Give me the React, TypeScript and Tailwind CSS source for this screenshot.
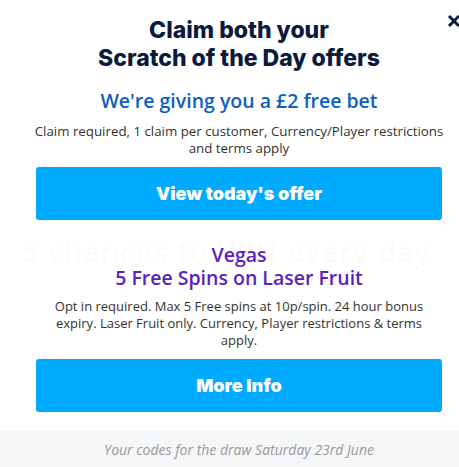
import React from "react";

export default function App() {
  const body = { fontFamily: '"Open Sans", "Noto Sans", sans-serif' };
  const heavy = { fontFamily: 'Inter, "Open Sans", sans-serif' };
  return (
    <div className="relative w-[459px] h-[467px] overflow-hidden bg-white" style={body}>
      <div className="absolute left-[22px] top-[230px] whitespace-nowrap text-[28px] text-[#fafafa] tracking-[2px]">
        5 chances to WIN every day
      </div>
      <button className="absolute right-[-7px] top-[11px] w-[24px] h-[20px] flex items-center justify-center text-[#0b1a3d]">
        <svg width="14" height="14" viewBox="0 0 14 14">
          <path d="M2 2 L12 12 M12 2 L2 12" stroke="currentColor" strokeWidth="3" strokeLinecap="butt" />
        </svg>
      </button>
      <div className="relative flex flex-col items-center pt-[16px] pl-[36px] pr-[17px]">
        <h1 className="text-[23px] leading-[28px] font-extrabold text-[#0b1a3d] text-center whitespace-nowrap" style={heavy}>
          Claim both your<br />Scratch of the Day offers
        </h1>
        <h2 className="mt-[17px] text-[19.5px] leading-[24px] font-semibold text-[#0d5fc0] text-center whitespace-nowrap">
          We're giving you a £2 free bet
        </h2>
        <p className="mt-[10px] text-[13.3px] leading-[17px] text-[#333] text-center whitespace-nowrap">
          Claim required, 1 claim per customer, Currency/Player restrictions<br />and terms apply
        </p>
        <div className="mt-[10px] w-full h-[53px] rounded-[3px] bg-[#00aaff] flex items-center justify-center text-white text-[18px] font-black" style={heavy}>
          View today's offer
        </div>
        <h2 className="mt-[23px] text-[19.5px] leading-[23px] font-semibold text-[#5b1fbf] text-center whitespace-nowrap">
          Vegas<br />5 Free Spins on Laser Fruit
        </h2>
        <p className="mt-[9px] text-[13px] leading-[17px] text-[#333] text-center whitespace-nowrap">
          Opt in required. Max 5 Free spins at 10p/spin. 24 hour bonus<br />expiry. Laser Fruit only. Currency, Player restrictions &amp; terms<br />apply.
        </p>
        <div className="mt-[10px] w-full h-[53px] rounded-[3px] bg-[#00aaff] flex items-center justify-center text-white text-[18px] font-black" style={heavy}>
          More Info
        </div>
      </div>
      <div className="absolute left-0 right-0 bottom-0 h-[36px] bg-[#f5f6f7] flex items-center justify-center pl-[36px] pr-[17px]">
        <span className="italic text-[14px] text-[#9a9a9a] whitespace-nowrap">Your codes for the draw Saturday 23rd June</span>
      </div>
    </div>
  );
}
